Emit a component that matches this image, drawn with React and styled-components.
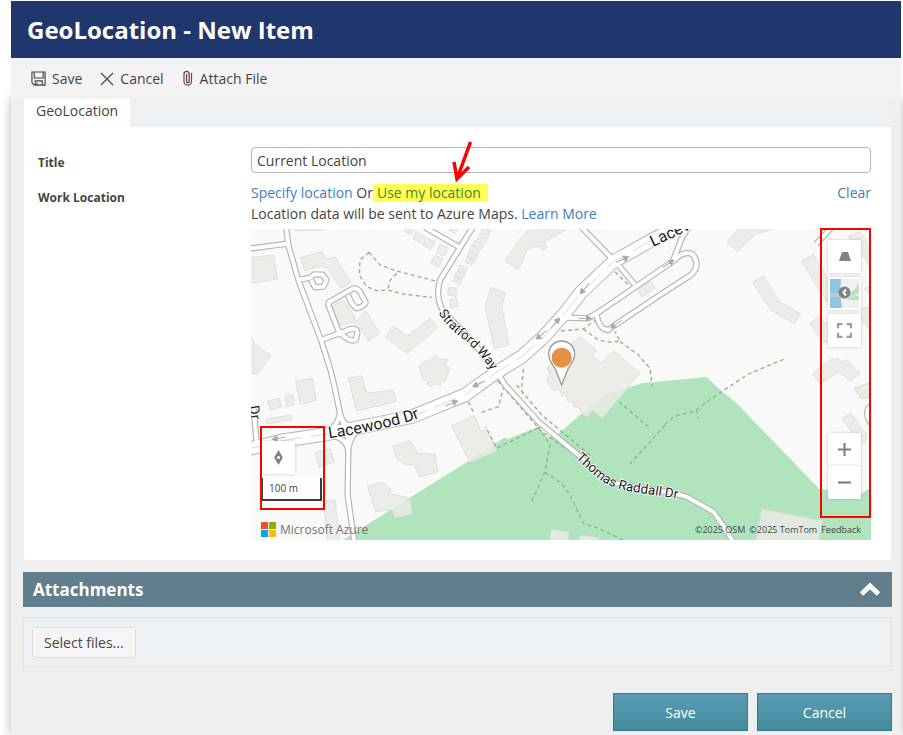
import React from "react";
import styled, { createGlobalStyle } from "styled-components";

const App = () => {
  return (
    <>
      <GlobalStyle />
      <Page>
        <Header>
          <PageTitle>GeoLocation - New Item</PageTitle>
        </Header>
        <Toolbar>
          <ToolButton type="button">
            <SaveIcon />
            Save
          </ToolButton>
          <ToolButton type="button">
            <CancelIcon />
            Cancel
          </ToolButton>
          <ToolButton type="button">
            <ClipIcon />
            Attach File
          </ToolButton>
        </Toolbar>
        <Body>
          <Panel>
            <TabStrip role="tablist">
              <Tab type="button" role="tab" aria-selected="true">
                GeoLocation
              </Tab>
            </TabStrip>
            <Form>
              <Row>
                <Label htmlFor="title">Title</Label>
                <TextInput id="title" type="text" defaultValue="Current Location" />
              </Row>
              <Row>
                <Label as="span">Work Location</Label>
                <Location>
                  <LocationLine>
                    <span>
                      <Link href="#specify">Specify location</Link> Or
                      <Highlight>
                        <Link href="#mine" $marked>
                          Use my location
                        </Link>
                        <Pointer />
                      </Highlight>
                    </span>
                    <Link href="#clear">Clear</Link>
                  </LocationLine>
                  <LocationLine>
                    <span>
                      Location data will be sent to Azure Maps.{" "}
                      <Link href="#more">Learn More</Link>
                    </span>
                  </LocationLine>
                  <AzureMap />
                </Location>
              </Row>
            </Form>
          </Panel>
          <SectionHeader>
            <SectionTitle>Attachments</SectionTitle>
            <CollapseButton type="button" aria-label="Collapse attachments">
              <svg width="22" height="15" viewBox="0 0 22 15">
                <path d="M2.500 12 11 4l8.500 8" fill="none" stroke="#fff" strokeWidth="5" />
              </svg>
            </CollapseButton>
          </SectionHeader>
          <Uploader>
            <SelectButton type="button">Select files...</SelectButton>
          </Uploader>
          <Footer>
            <ActionButton type="button">Save</ActionButton>
            <ActionButton type="button">Cancel</ActionButton>
          </Footer>
        </Body>
      </Page>
    </>
  );
};

export default App;

const SaveIcon = () => (
  <svg width="15" height="15" viewBox="0 0 16 16" fill="none" stroke="#444" strokeWidth="1.2">
    <path d="M1 1h14v14H3.500L1 12.500z" />
    <path d="M3.500 1v6.500h9.500V1M4.500 15v-4.500h7.500V15M6.500 15v-2.500" />
  </svg>
);

const CancelIcon = () => (
  <svg width="14" height="14" viewBox="0 0 14 14" fill="none" stroke="#444" strokeWidth="1.100">
    <path d="M1 1l12 12M13 1L1 13" />
  </svg>
);

const ClipIcon = () => (
  <svg width="12" height="17" viewBox="-1 0 12 17" fill="none" strokeWidth="1.200">
    <path d="M1 3.500V12a3.800 3.800 0 0 0 7.500 0V3" stroke="#555" />
    <path d="M1 4a2.600 2.600 0 0 1 5.200 0v7.500a1.300 1.300 0 0 1-2.600 0V4" stroke="#7a2b2b" />
  </svg>
);

const Pointer = () => (
  <PointerSvg viewBox="0 0 22 42" fill="none" stroke="#f00" strokeWidth="3.500">
    <path d="M18.500 1L5 38M2 21l3 17 12-12" />
  </PointerSvg>
);

// Map drawing: three units for each pixel
const GREEN =
  "M277 933L362 878L642 703L762 625L769 631L862 593L887 623L915 620L1057 498L1127 478L1172 463L1242 456L1367 444L1400 476L1457 523L1705 780L1832 793L1860 776V933z";

const BUILDINGS = [
  {
    at: "translate(-18 -12)",
    shapes: [
      "10,99 85,90 98,162 10,176",
      "166,98 230,80 243,103 270,96 318,172 288,190 248,132 228,122 180,138",
      "262,243 295,225 322,263 334,290 362,258 404,325 370,347 340,298 320,292 285,300",
      "443,303 488,333 556,279 578,308 487,386 422,337",
      "522,423 540,408 552,406 572,390 585,402 608,402 602,420 613,430 607,452 600,468 588,468 586,482 570,476 560,485 548,478 546,465 535,465",
      "10,320 30,358 78,392 35,450 10,440",
      "152,468 202,460 214,526 165,538",
      "310,460 350,452 362,498 372,504 445,495 453,530 335,558",
      "150,5 240,5 236,15 152,17",
      "512,20 538,34 526,54 504,42",
      "542,36 570,52 556,72 534,60",
      "585,58 610,70 597,94 574,82",
      "570,90 594,102 580,128 557,114",
      "484,5 508,12 496,28 480,20",
      "616,4 640,12 630,24 612,16",
      "612,186 636,190 632,214 608,210",
      "614,224 636,220 638,244 618,248",
    ],
  },
  {
    at: "translate(612 -12)",
    shapes: [
      "150,108 195,42 230,5 330,5 332,16 268,50 276,68 262,76 252,62 218,72 190,134",
      "108,188 152,203 140,245 162,360 118,370 90,242",
      "547,190 588,170 600,190 560,216",
      "82,12 106,15 100,32 78,26",
      "74,28 98,38 92,52 68,44",
      "60,46 86,58 80,72 54,60",
      "50,62 76,76 68,88 44,76",
      "42,80 68,92 60,106 36,94",
      "36,98 58,108 50,120 30,110",
      "14,120 38,130 30,144 8,134",
      "6,138 30,148 22,160 0,150",
      "0,154 20,164 14,178 -6,168",
      "375,335 425,375 412,387 440,415 475,378 555,445 442,580 412,555 397,577 378,562 372,548 358,546 354,530 340,530 334,512 320,512 314,494 296,496 285,482 275,465 285,445 275,430 300,400 340,360",
    ],
  },
  {
    at: "translate(1242 -12)",
    shapes: [
      "187,50 227,5 325,5 320,14 270,28 217,80",
      "263,172 295,152 343,230 406,266 388,296 318,256",
      "410,108 445,88 500,180 490,235 475,215",
      "434,296 460,275 496,304 490,350 478,352",
      "442,447 503,398 510,405 520,400 530,410 545,404 585,446 556,468 522,440 466,476",
      "550,35 585,20 625,80 625,148 600,100",
      "598,190 625,180 625,220",
      "590,250 625,245 625,326 590,285",
      "568,490 625,468 625,512 590,522",
    ],
  },
  {
    at: "translate(-18 468)",
    shapes: [
      "68,48 103,40 110,65 75,75",
      "120,35 130,25 145,32 148,58 125,66",
      "62,103 138,90 142,104 66,117",
      "211,203 255,192 268,230 222,247",
      "443,185 495,168 520,204 570,208 578,262 525,275 508,240 480,238 455,220",
      "368,303 410,292 435,310 438,326 494,340 503,388 450,398 440,374 392,380",
      "235,350 270,346 285,470 248,470",
      "620,122 688,92 708,140 724,132 756,198 675,232",
    ],
  },
  {
    at: "translate(612 468)",
    shapes: ["290,432 342,442 338,470 282,470", "375,450 430,458 430,470 372,470"],
  },
  {
    at: "translate(1242 468)",
    shapes: [
      "290,372 472,407 460,470 272,470",
      "530,100 558,84 605,150 602,174 580,168",
      "568,12 610,-4 625,-4 625,32 590,40",
    ],
  },
];

const ROADS = [
  "M105 -5L112 48L142 153L210 333L237 418L250 470L267 553L290 620L292 658L290 798L310 940",
  "M-5 59L110 44",
  "M142 153L177 146L190 136L215 137L227 153L217 173L192 175L180 153",
  "M265 312L232 228Q230 220 242 215L307 178Q322 178 328 190L344 220Q340 232 317 238L303 225L291 198",
  "M210 333L300 300Q320 296 319 312L314 333Q300 338 284 326L264 308",
  "M665 -5L567 153Q560 178 562 200Q565 240 590 262L640 310L732 418L762 468L862 578L982 678L1040 728Q1080 765 1130 770L1242 788L1307 803L1387 848L1422 898L1447 940",
  "M522 -5L624 54",
  "M992 -5L1082 88",
  "M1102 108L1152 168",
  "M947 266L1012 268L1042 250L1267 96Q1300 62 1325 76Q1350 108 1320 138L1242 188L1092 288L1072 303Q1045 302 1037 258",
  "M1267 93L1292 28L1312 -5",
  "M1742 -5L1695 45",
  "M7 528L17 640",
  "M267 553Q262 585 225 618M270 570Q290 595 325 600M292 668Q285 620 235 622M292 658Q300 620 320 604",
  "M1868 525Q1832 545 1862 585",
];

const MAIN_ROAD =
  "M-10 660L100 634L222 616L482 563L642 498L732 433L812 383L877 325L942 252L992 188L1087 98L1212 28L1300 -14";

const FOOTPATHS = [
  "M354 70L327 93L325 138L347 173L377 185L410 183L462 196L542 205M354 70L387 108L437 126L562 158M437 133L418 153L410 183",
  "M930 306L997 300L1027 278L1042 273M997 300L1042 333L1082 340L1107 336L1092 308M1107 338L1162 378L1197 418L1204 473",
  "M1092 128L1137 173M817 420L812 478L816 500M740 455L870 606L957 668M797 468L872 558L1022 683",
  "M862 593L897 648L882 728L840 823M862 596L737 658L704 593M882 730L932 763L957 798L997 883L1042 898L1117 933",
  "M1104 518L1197 598M1242 586L1267 563L1332 546L1382 508L1492 435L1600 390M1337 543L1342 568M1242 588L1137 705",
  "M652 518L669 553M692 550L742 533L757 478",
];

const ARROWS = [
  [915, 280, -48],
  [1118, 90, -24],
  [998, 182, 130],
  [868, 320, 140],
  [680, 466, 155],
  [605, 522, -22],
  [80, 628, 170],
  [1005, 268, 0],
  [1255, 102, -34],
  [1092, 288, 145],
];

const MapCanvas = () => (
  <Canvas viewBox="0 0 1860 933" preserveAspectRatio="xMidYMid slice" role="img">
    <path d={GREEN} fill="#b0e4bd" />
    {BUILDINGS.map((group) => (
      <g key={group.at} transform={group.at} fill="#ebece6" stroke="#dcddd6" strokeWidth="3" opacity="0.86">
        {group.shapes.map((points) => (
          <polygon key={points} points={points} />
        ))}
      </g>
    ))}
    <g fill="none" stroke="#8fb58a" strokeWidth="4" strokeDasharray="12 9">
      {FOOTPATHS.map((d) => (
        <path key={d} d={d} />
      ))}
    </g>
    <g fill="none" stroke="#b5b5b5" strokeWidth="19" strokeLinejoin="round">
      {ROADS.map((d) => (
        <path key={d} d={d} />
      ))}
      <path d={MAIN_ROAD} strokeWidth="43" />
    </g>
    <g fill="none" stroke="#fff" strokeWidth="12" strokeLinejoin="round">
      {ROADS.map((d) => (
        <path key={d} d={d} />
      ))}
      <path d={MAIN_ROAD} strokeWidth="37" />
    </g>
    <path d={MAIN_ROAD} fill="none" stroke="#c4c4c4" strokeWidth="2" strokeDasharray="70 26" />
    {ARROWS.map(([x, y, turn]) => (
      <path
        key={x}
        transform={`translate(${x} ${y}) rotate(${turn})`}
        d="M-24 0H10M2 -8L16 0L2 8z"
        fill="#aaa"
        stroke="#aaa"
        strokeWidth="3"
      />
    ))}
    <defs>
      <path id="lacewood" d="M234 628Q360 610 482 576L600 530" />
      <path id="lacewood-east" d="M1206 54L1300 10L1400 -40" />
      <path id="stratford" d="M562 252Q590 297 640 333Q685 370 724 430" />
      <path id="raddall" d="M974 688L1036 744Q1075 776 1130 786L1300 812" />
    </defs>
    <StreetName $size={48}>
      <textPath href="#lacewood">Lacewood Dr</textPath>
    </StreetName>
    <StreetName $size={48}>
      <textPath href="#lacewood-east">Lacev</textPath>
    </StreetName>
    <StreetName $size={39}>
      <textPath href="#stratford">Stratford Way</textPath>
    </StreetName>
    <StreetName $size={40}>
      <textPath href="#raddall">Thomas Raddall Dr</textPath>
    </StreetName>
    <StreetName $size={42} transform="translate(-6 532) rotate(80)">
      Dr
    </StreetName>
    <path
      d="M932 468L912 418C902 402 893 393 893 375A39 39 0 0 1 971 375C971 393 962 402 952 418z"
      fill="#fff"
      stroke="#999"
      strokeWidth="4"
    />
    <circle cx="932" cy="386" r="30" fill="#e68f45" />
  </Canvas>
);

const AzureMap = () => (
  <MapFrame>
    <MapCanvas />
    <MapTools>
      <MapButton type="button" aria-label="Pitch">
        <svg width="12" height="9" viewBox="0 0 12 9">
          <path d="M3 0h6l3 9H0z" fill="#7d8285" />
        </svg>
      </MapButton>
      <MapButton type="button" aria-label="Map style">
        <svg width="29" height="29" viewBox="0 0 29 29">
          <path d="M0 0h29v29H0z" fill="#f0f0f0" />
          <path d="M0 0h11l-1 15 2 14H0z" fill="#8fc5e6" />
          <path d="M18 15Q24 13 29 4v10q-4 2-11 4zM17 20q8-4 12-3v4q-5 1-12-1z" fill="#b0e4bd" />
          <path d="M0 15h10M0 17h10M10 20q12-1 19-7" fill="none" stroke="#eccdbb" strokeWidth="1" />
          <circle cx="14.500" cy="13.500" r="6" fill="#7d8285" />
          <path d="M16 10.500l-2.500 3 2.500 3" fill="none" stroke="#fff" strokeWidth="2" />
        </svg>
      </MapButton>
      <MapButton type="button" aria-label="Full screen">
        <svg width="15" height="15" viewBox="0 0 14 14" fill="none" stroke="#9a9da0" strokeWidth="2">
          <path d="M1 5V1h4M9 1h4v4M13 9v4H9M5 13H1V9" />
        </svg>
      </MapButton>
    </MapTools>
    <ZoomTools>
      <MapButton type="button" aria-label="Zoom in">
        <svg width="13" height="13" viewBox="0 0 12 12">
          <path d="M6 0v12M0 6h12" stroke="#7d8285" strokeWidth="2" />
        </svg>
      </MapButton>
      <MapButton type="button" aria-label="Zoom out">
        <svg width="13" height="13" viewBox="0 0 12 12">
          <path d="M0 6h12" stroke="#7d8285" strokeWidth="2" />
        </svg>
      </MapButton>
    </ZoomTools>
    <CompassTools>
      <MapButton type="button" aria-label="Reset north">
        <svg width="9" height="15" viewBox="0 0 8 14">
          <path d="M4 0l4 7-4 7-4-7z" fill="#7d8285" />
          <circle cx="4" cy="7" r="1.500" fill="#fff" />
        </svg>
      </MapButton>
      <ScaleBar>100 m</ScaleBar>
    </CompassTools>
    <Brand>
      <svg width="15" height="15" viewBox="0 0 15 15">
        <path d="M0 0h7v7H0z" fill="#f25022" />
        <path d="M8 0h7v7H8z" fill="#7fba00" />
        <path d="M0 8h7v7H0z" fill="#00a4ef" />
        <path d="M8 8h7v7H8z" fill="#ffb900" />
      </svg>
      Microsoft Azure
    </Brand>
    <Credits>
      <span>©2025 OSM</span>
      <span>©2025 TomTom</span>
      <a href="#feedback">Feedback</a>
    </Credits>
    <LeftCallout />
    <RightCallout />
  </MapFrame>
);

const GlobalStyle = createGlobalStyle`
  * {
    box-sizing: border-box;
  }

  body {
    margin: 0;
    background: #fff;
    color: #444;
    font-family: "Open Sans", "Noto Sans", sans-serif;
    font-size: 14px;
    line-height: 21px;
  }

  button,
  input {
    font: inherit;
    color: inherit;
  }
`;

const Page = styled.div`
  display: flex;
  flex-direction: column;
  min-height: 100vh;
  padding: 1px 2px 0 11px;
  overflow: hidden;
`;

const Header = styled.header`
  display: flex;
  align-items: center;
  height: 57px;
  padding: 0 16px;
  background: #20376d;
`;

const PageTitle = styled.h1`
  margin: 0;
  color: #fff;
  font-size: 24px;
  font-weight: 700;
  line-height: 32px;
`;

const Toolbar = styled.div`
  display: flex;
  align-items: center;
  gap: 18px;
  height: 41px;
  padding: 0 20px;
  background: #f3f3f3;
  position: relative;
`;

const ToolButton = styled.button`
  display: flex;
  align-items: center;
  gap: 6px;
  padding: 0;
  border: 0;
  background: none;
`;

const Body = styled.main`
  flex: 1;
  padding: 0 9px 4px 12px;
  background: #efefef;
  box-shadow: 0 0 10px rgba(0, 0, 0, 0.3);
`;

const Panel = styled.section`
  margin: 0 1px 12px;
  border-radius: 0 0 3px 3px;
  background: #fff;
`;

const TabStrip = styled.div`
  display: flex;
  height: 28px;
  background: #edf1f4;
`;

const Tab = styled.button`
  padding: 0 12px 5px;
  border: 0;
  background: #fff;
`;

const Form = styled.form`
  display: flex;
  flex-direction: column;
  gap: 9px;
  padding: 20px 20px 20px 14px;
`;

const Row = styled.div`
  display: grid;
  grid-template-columns: 213px 1fr;
`;

const Label = styled.label`
  padding-top: 5px;
  font-size: 12px;
  font-weight: 700;
`;

const TextInput = styled.input`
  width: 100%;
  height: 26px;
  padding: 0 5px;
  border: 1px solid #b5b5b5;
  border-radius: 4px;
  background: #fff;
`;

const Location = styled.div`
  min-width: 0;
`;

const LocationLine = styled.div`
  display: flex;
  justify-content: space-between;
`;

const Link = styled.a`
  color: ${(props) => (props.$marked ? "#3f8a1c" : "#3a7fc1")};
  text-decoration: none;
`;

const Highlight = styled.span`
  display: inline-block;
  position: relative;
  height: 18px;
  padding: 0 7px 0 4px;
  background: #ffff54;
  line-height: 18px;
`;

const PointerSvg = styled.svg`
  position: absolute;
  left: 79px;
  bottom: 19px;
  width: 22px;
  height: 42px;
`;

const MapFrame = styled.div`
  position: relative;
  height: 311px;
  margin-top: 5px;
  background: #f9f9f8;
`;

const Canvas = styled.svg`
  display: block;
  width: 100%;
  height: 100%;
`;

const StreetName = styled.text`
  fill: #1c1c1c;
  stroke: #fff;
  stroke-width: 5px;
  paint-order: stroke;
  font-family: Roboto, sans-serif;
  font-size: ${(props) => props.$size}px;
`;

const MapTools = styled.div`
  position: absolute;
  top: 11px;
  right: 10px;
  display: grid;
  gap: 4px;
`;

const ZoomTools = styled.div`
  position: absolute;
  right: 10px;
  bottom: 41px;
  display: grid;
`;

const CompassTools = styled.div`
  position: absolute;
  left: 11px;
  bottom: 39px;
  display: grid;
  gap: 4px;
`;

const MapButton = styled.button`
  display: grid;
  place-items: center;
  width: 33px;
  height: 33px;
  padding: 0;
  border: 0;
  background: #fff;
  box-shadow: 0 0 3px rgba(0, 0, 0, 0.2);
`;

const ScaleBar = styled.div`
  width: 60px;
  height: 23px;
  padding-left: 6px;
  border: 2px solid #3a3a3a;
  border-top: 0;
  border-left-width: 1px;
  background: rgba(255, 255, 255, 0.8);
  font-size: 10px;
`;

const Brand = styled.div`
  position: absolute;
  left: 10px;
  bottom: 3px;
  display: flex;
  align-items: center;
  gap: 4px;
  height: 16px;
  color: #737373;
  font-size: 12px;
  font-weight: 500;
`;

const Credits = styled.div`
  position: absolute;
  right: 10px;
  bottom: 2px;
  display: flex;
  gap: 4px;
  height: 16px;
  font-size: 9px;
  line-height: 16px;

  & a {
    color: inherit;
    text-decoration: none;
  }
`;

const Callout = styled.div`
  position: absolute;
  border: 2px solid #f00;
  pointer-events: none;
`;

const LeftCallout = styled(Callout)`
  left: 9px;
  bottom: 30px;
  width: 65px;
  height: 84px;
`;

const RightCallout = styled(Callout)`
  top: -1px;
  right: 0;
  width: 51px;
  height: 290px;
`;

const SectionHeader = styled.div`
  display: flex;
  align-items: center;
  justify-content: space-between;
  height: 35px;
  margin-bottom: 10px;
  padding: 0 11px 0 10px;
  background: #627d8b;
`;

const SectionTitle = styled.h2`
  margin: 0;
  color: #fff;
  font-size: 17px;
  font-weight: 700;
`;

const CollapseButton = styled.button`
  display: flex;
  padding: 0;
  border: 0;
  background: none;
`;

const Uploader = styled.div`
  height: 50px;
  margin-bottom: 26px;
  padding: 9px 8px;
  border: 1px solid #dde2e6;
  background: #edf1f4;
`;

const SelectButton = styled.button`
  height: 31px;
  padding: 0 11px;
  border: 1px solid #dfdfdf;
  border-radius: 3px;
  background: #f5f5f5;
`;

const Footer = styled.div`
  display: flex;
  justify-content: flex-end;
  gap: 9px;
`;

const ActionButton = styled.button`
  width: 135px;
  height: 38px;
  padding: 0;
  border: 1px solid #3a7596;
  background: linear-gradient(#5a9bb8, #428d99);
  color: #fff;
`;
